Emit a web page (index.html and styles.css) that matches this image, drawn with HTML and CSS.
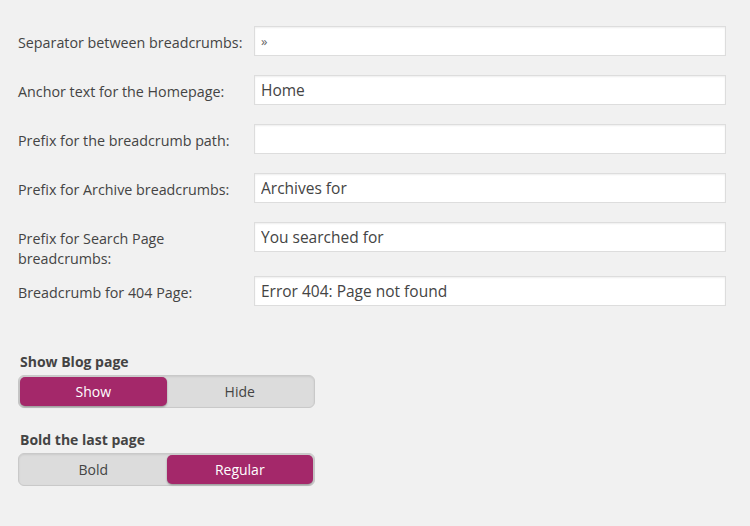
FILE: index.html
```html
<!DOCTYPE html>
<html lang="en">
<head>
    <meta charset="UTF-8">
    <meta name="viewport" content="width=device-width, initial-scale=1.0">
    <title>Breadcrumbs settings</title>

    <link rel="stylesheet" href="styles.css">
</head>
<body>

    <form class="settings">
        <div class="row">
            <label for="sep">Separator between breadcrumbs:</label>
            <input type="text" id="sep" class="small-value" value="&raquo;">
        </div>
        <div class="row">
            <label for="home">Anchor text for the Homepage:</label>
            <input type="text" id="home" value="Home">
        </div>
        <div class="row">
            <label for="prefix">Prefix for the breadcrumb path:</label>
            <input type="text" id="prefix" value="">
        </div>
        <div class="row">
            <label for="archive">Prefix for Archive breadcrumbs:</label>
            <input type="text" id="archive" value="Archives for">
        </div>
        <div class="row">
            <label for="search">Prefix for Search Page breadcrumbs:</label>
            <input type="text" id="search" value="You searched for">
        </div>
        <div class="row">
            <label for="notfound">Breadcrumb for 404 Page:</label>
            <input type="text" id="notfound" value="Error 404: Page not found">
        </div>

        <div class="toggles">
            <div class="toggle-title">Show Blog page</div>
            <div class="switch">
                <button type="button" class="on">Show</button>
                <button type="button">Hide</button>
            </div>

            <div class="toggle-title">Bold the last page</div>
            <div class="switch">
                <button type="button">Bold</button>
                <button type="button" class="on">Regular</button>
            </div>
        </div>
    </form>

    <script>
        // Switch the active side of a toggle
        var switches = document.querySelectorAll('.switch');
        switches.forEach(function (group) {
            var buttons = group.querySelectorAll('button');
            buttons.forEach(function (button) {
                button.addEventListener('click', function () {
                    buttons.forEach(function (b) {
                        b.className = '';
                    });
                    button.className = 'on';
                });
            });
        });
    </script>
</body>
</html>
```

FILE: styles.css
```css
body {
    margin: 0;
    background-color: #f1f1f1;
    font-family: "Open Sans", "Noto Sans", Arial, sans-serif;
    color: #444;
}

.settings {
    width: 708px;
    padding: 26px 0 0 18px;
}

.row {
    display: flex;
    align-items: flex-start;
}

.row label {
    width: 236px;
    flex-shrink: 0;
    padding-right: 8px;
    box-sizing: border-box;
    margin: 7px 0;
    font-size: 14.3px;
    line-height: 20px;
}

.row input {
    width: 472px;
    height: 30px;
    margin: 0 0 19px;
    padding: 0 6px;
    box-sizing: border-box;
    border: 1px solid #ddd;
    box-shadow: inset 0 1px 2px rgba(0, 0, 0, 0.07);
    background-color: #fff;
    font-family: "Open Sans", "Noto Sans", Arial, sans-serif;
    font-size: 15.5px;
    color: #444;
    outline: none;
}

.row input.small-value {
    font-size: 13px;
    color: #666;
}

.toggles {
    padding-top: 27px;
}

.toggle-title {
    margin: 0 0 3px 2px;
    font-size: 14px;
    font-weight: bold;
    line-height: 20px;
}

.switch {
    display: flex;
    width: 297px;
    height: 33px;
    padding: 1px;
    margin-bottom: 22px;
    box-sizing: border-box;
    border: 1px solid #c9c9c9;
    border-radius: 6px;
    background-color: #dcdcdc;
    box-shadow: inset 0 1px 2px rgba(0, 0, 0, 0.08);
}

.switch button {
    flex: 1;
    border: 0;
    border-radius: 5px;
    background: none;
    font-family: "Open Sans", "Noto Sans", Arial, sans-serif;
    font-size: 14px;
    color: #444;
    cursor: pointer;
}

.switch button.on {
    background-color: #a4286a;
    color: #fff;
    box-shadow: 0 1px 2px rgba(0, 0, 0, 0.35);
}
```
